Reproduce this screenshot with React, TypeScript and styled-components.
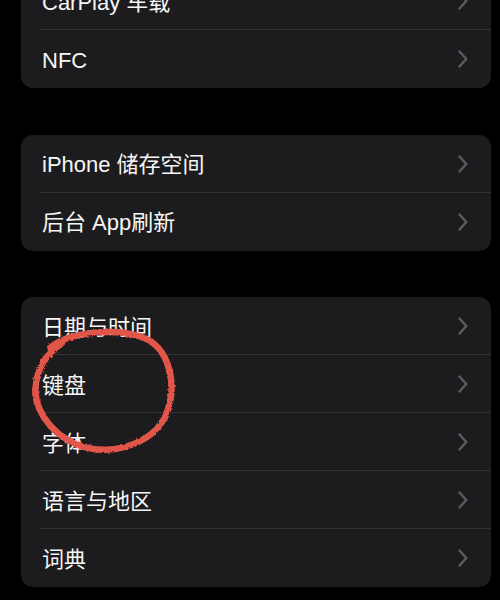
import React from "react";
import styled, { createGlobalStyle } from "styled-components";

const GlobalStyle = createGlobalStyle`
  html, body {
    margin: 0;
    padding: 0;
    background: #000;
  }
`;

const groups: string[][] = [
  ["CarPlay 车载", "NFC"],
  ["iPhone 储存空间", "后台 App刷新"],
  ["日期与时间", "键盘", "字体", "语言与地区", "词典"],
];

function Chevron() {
  return (
    <svg width="10" height="18" viewBox="0 0 10 18" fill="none">
      <path
        d="M1.5 1.5 L8.3 9 L1.5 16.5"
        stroke="#5c5c60"
        strokeWidth="2.4"
        strokeLinecap="round"
        strokeLinejoin="round"
      />
    </svg>
  );
}

// hand-drawn red marker loop round 键盘
function Scribble() {
  return (
    <ScribbleSvg width="500" height="600" viewBox="0 0 500 600">
      <defs>
        <filter id="rough" x="-10%" y="-10%" width="120%" height="120%">
          <feTurbulence type="fractalNoise" baseFrequency="0.35" numOctaves="2" seed="3" />
          <feDisplacementMap in="SourceGraphic" scale="3" />
        </filter>
      </defs>
      <path
        d="M50 348 C66 333 112 327 142 337 C170 347 178 386 166 415 C152 445 110 457 78 445 C48 433 32 405 36 383 C39 365 46 355 62 343"
        fill="none"
        stroke="#e2554a"
        strokeWidth="6.5"
        strokeLinecap="round"
        filter="url(#rough)"
      />
    </ScribbleSvg>
  );
}

export default function App() {
  return (
    <>
      <GlobalStyle />
      <Screen>
        <List>
          {groups.map((items, gi) => (
            <Group key={gi}>
              {items.map((label, i) => (
                <Row key={label} $last={i === items.length - 1}>
                  <Label>{label}</Label>
                  <Chevron />
                </Row>
              ))}
            </Group>
          ))}
        </List>
        <Scribble />
      </Screen>
    </>
  );
}

const Screen = styled.div`
  position: relative;
  width: 500px;
  height: 600px;
  overflow: hidden;
  background: #000;
  font-family: "Liberation Sans", "Noto Sans CJK SC", sans-serif;
`;

const List = styled.div`
  margin-top: -28px;
  padding: 0 9px 0 21px;
  display: flex;
  flex-direction: column;
  gap: 46.5px;
`;

const Group = styled.div`
  background: #1c1c1e;
  border-radius: 12px;
  overflow: hidden;
`;

const Row = styled.div<{ $last: boolean }>`
  position: relative;
  height: 58px;
  display: flex;
  align-items: center;
  justify-content: space-between;
  padding: 0 23px 0 21px;

  &::after {
    content: "";
    display: ${({ $last }) => ($last ? "none" : "block")};
    position: absolute;
    left: 20px;
    right: 0;
    bottom: 0;
    height: 1px;
    background: #333335;
  }
`;

const Label = styled.span`
  color: #f6f6f6;
  font-size: 22px;
  line-height: 1;
  padding-top: 3px;
`;

const ScribbleSvg = styled.svg`
  position: absolute;
  top: 0;
  left: 0;
  pointer-events: none;
`;
